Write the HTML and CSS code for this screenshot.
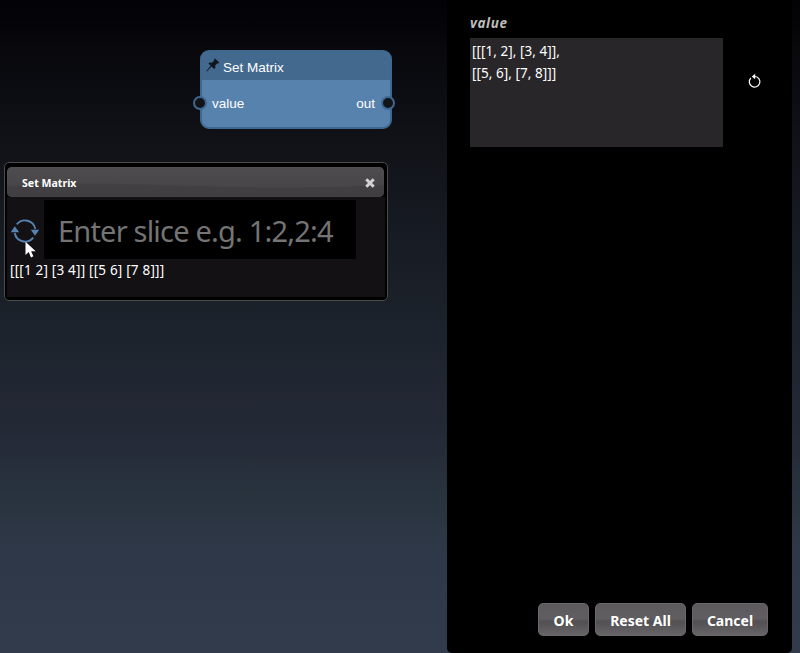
FILE: index.html
```html
<!DOCTYPE html>
<html lang="en">
<head>
<meta charset="utf-8">
<title>Set Matrix</title>
<link rel="stylesheet" href="styles.css">
</head>
<body>
<div class="app">
  <main class="canvas">
    <section class="node">
      <header class="node-head">
        <svg class="pin" width="14" height="14" viewBox="0 0 14 14"><path d="M8.9 .5 13.3 4.5 12.4 5.5 11.4 5.2 9.2 7.6 9.3 10.1 8.2 11 5.5 8.6 1 13.2.3 13.5.5 12.7 4.7 7.8 2.5 5.5 3.5 4.5 6 4.7 8.3 2.3 8 1.4z"/></svg>
        <span>Set Matrix</span>
      </header>
      <div class="node-body">
        <i class="port port-in"></i>
        <span class="in-label">value</span>
        <span class="out-label">out</span>
        <i class="port port-out"></i>
      </div>
    </section>
    <section class="window">
      <header class="titlebar">
        <svg class="sheen" width="377" height="30" viewBox="0 0 377 30" preserveAspectRatio="none"><path d="M0 19C70 15 130 17 190 19S310 22 377 18V30H0z"/></svg>
        <span class="window-title">Set Matrix</span>
        <svg class="close" width="10" height="10" viewBox="0 0 10 10"><path d="M1.3 1.3 8.7 8.7M8.7 1.3 1.3 8.7"/></svg>
      </header>
      <div class="slice-row">
        <svg class="refresh" width="30" height="26" viewBox="0 0 30 26"><path class="arc" d="M6.8 6.4A10.5 10.5 0 0 1 25.3 11M23.2 19.6A10.5 10.5 0 0 1 4.7 15"/><path class="tip" d="M.7 14.3 4.8 8.3 9.2 14.3zM20.8 11.7H29.2L25 17.7z"/></svg>
        <div class="slice-input">Enter slice e.g. 1:2,2:4</div>
      </div>
      <p class="result">[[[1 2] [3 4]] [[5 6] [7 8]]]</p>
    </section>
    <svg class="cursor" width="12" height="18" viewBox="0 0 12 18"><path d="M.5.7V14L3.7 11.1 6 16.4 8.4 15.3 6.1 10.2H10.7z"/></svg>
  </main>
  <aside class="panel">
    <h2 class="field-name">value</h2>
    <div class="field-row">
      <div class="textarea">[[[1, 2], [3, 4]],<br>[[5, 6], [7, 8]]]</div>
      <svg class="reset" width="14" height="16" viewBox="0 0 14 16"><path class="ring" d="M2.9 5A5.3 5.3 0 1 0 7 3.5"/><path class="head" d="M7.2.7V6.2L3.8 3.4z"/></svg>
    </div>
    <footer class="actions">
      <button class="btn ok">Ok</button>
      <button class="btn reset-all">Reset All</button>
      <button class="btn cancel">Cancel</button>
    </footer>
  </aside>
</div>
</body>
</html>
```

FILE: styles.css
```css
* { box-sizing: border-box; }
body { margin: 0; font-family: "Noto Sans", "Open Sans", sans-serif; color: #fff; }
.app {
  display: grid;
  grid-template-columns: 447px 345px;
  width: 800px;
  height: 653px;
  overflow: hidden;
  background: linear-gradient(#020104 0, #08080d 50px, #0f1116 130px, #171b23 240px, #1c222b 320px, #242936 430px, #28333e 495px, #2f3848 550px, #323b4c 653px);
}
.canvas { position: relative; }

.node {
  position: absolute;
  left: 200px;
  top: 50px;
  width: 192px;
  height: 79px;
  border: 2px solid #3e6890;
  border-radius: 9px;
  background: #5882ae;
  font: 13.5px "Liberation Sans", sans-serif;
}
.node-head {
  display: flex;
  align-items: center;
  gap: 3px;
  height: 28px;
  padding: 2px 0 0 4px;
  border-radius: 7px 7px 0 0;
  background: #44698f;
}
.pin { fill: #10161d; margin-top: -4px; }
.node-body {
  display: flex;
  align-items: center;
  justify-content: space-between;
  height: 46px;
  padding: 0 15px 0 10px;
}
.port {
  position: absolute;
  top: 44px;
  width: 14px;
  height: 14px;
  border: 2px solid #3e6890;
  border-radius: 50%;
  background: #121418;
}
.port-in { left: -9px; }
.port-out { right: -5px; }

.window {
  position: absolute;
  left: 4px;
  top: 162px;
  width: 384px;
  height: 139px;
  padding: 4px 3px 3px 2px;
  border: 1px solid #4b4b4b;
  border-radius: 5px;
  background: linear-gradient(#131114, #131114) 2px 34px / 378px 100px no-repeat #000;
}
.titlebar {
  position: relative;
  display: flex;
  align-items: center;
  justify-content: space-between;
  height: 30px;
  padding: 1px 9px 0 15px;
  border-radius: 5px;
  overflow: hidden;
  background: linear-gradient(#4e4c4e, #444244);
  box-shadow: inset 0 0 1px #656365;
}
.sheen { position: absolute; left: 0; top: 0; fill: #3c3a3c; opacity: .5; }
.window-title { position: relative; font-size: 10.6px; font-weight: 700; }
.close { position: relative; fill: none; stroke: #d4d2d4; stroke-width: 3; }
.slice-row { display: flex; align-items: center; height: 59px; margin-top: 3px; padding-left: 3px; }
.refresh { flex: none; margin-top: 3px; }
.refresh .arc { fill: none; stroke: #5682b0; stroke-width: 1.9; }
.refresh .tip { fill: #5682b0; }
.slice-input {
  width: 312px;
  height: 59px;
  margin-left: 4px;
  padding-left: 14px;
  background: #000;
  color: #747474;
  font-size: 29px;
  letter-spacing: -.8px;
  line-height: 62px;
  white-space: nowrap;
}
.result { margin: 1px 0 0 3px; font-size: 13.5px; letter-spacing: .2px; line-height: 20px; white-space: nowrap; }
.cursor { position: absolute; left: 25px; top: 241px; fill: #fff; }

.panel {
  display: flex;
  flex-direction: column;
  padding: 14px 24px 17px 23px;
  border-radius: 0 0 5px 5px;
  background: #000;
}
.field-name { margin: 0 0 5px; color: #bcbcbc; font-size: 13.5px; letter-spacing: .6px; line-height: 19px; font-weight: 700; font-style: italic; }
.field-row { display: flex; align-items: flex-start; }
.textarea {
  width: 253px;
  height: 109px;
  padding: 3px 2px;
  background: #282629;
  font-size: 13.5px;
  letter-spacing: .05px;
  line-height: 21.5px;
}
.reset { margin: 35px 0 0 25px; }
.reset .ring { fill: none; stroke: #fff; stroke-width: 1.2; }
.reset .head { fill: #fff; }
.actions { display: flex; justify-content: flex-end; gap: 6px; margin-top: auto; }
.btn {
  height: 33px;
  padding: 1px 0 0;
  border: 1px solid #696769;
  border-radius: 5px;
  background: linear-gradient(#5c5a5c 0, #605e60 45%, #525052 58%, #676567 100%);
  color: #fff;
  font: 700 14px "Noto Sans", "Open Sans", sans-serif;
}
.ok { width: 51px; }
.reset-all { width: 91px; }
.cancel { width: 76px; }
```
